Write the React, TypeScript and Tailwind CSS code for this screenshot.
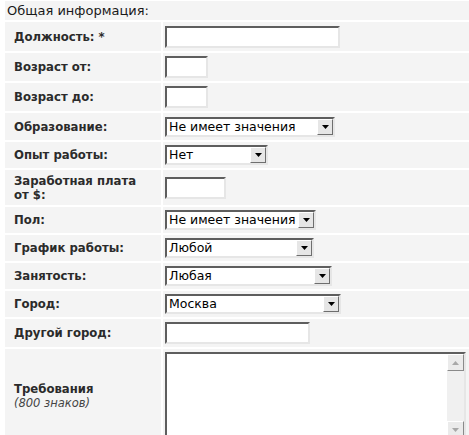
// Vacancy form "Общая информация" — old table-style layout with grey cells
// separated by thin white gaps, classic inset inputs and dropdowns.

const labelFont = "font-['DejaVu_Sans',Verdana,sans-serif]";

function TextBox({ w }: { w: string }) {
  return (
    <div
      className={`h-[22px] ${w} border-2 border-t-[#5e5e5e] border-l-[#5e5e5e] border-b-[#e6e6e6] border-r-[#e6e6e6] bg-white`}
    />
  );
}

function Arrow({ dir, tone }: { dir: 'up' | 'down'; tone: string }) {
  return (
    <svg width="7" height="4" viewBox="0 0 7 4" className={tone}>
      {dir === 'down' ? <path d="M0 0h7L3.5 4z" fill="currentColor" /> : <path d="M0 4h7L3.5 0z" fill="currentColor" />}
    </svg>
  );
}

function Select({ w, value }: { w: string; value: string }) {
  return (
    <div
      className={`flex h-[20px] ${w} items-stretch border-2 border-t-[#5e5e5e] border-l-[#5e5e5e] border-b-[#e6e6e6] border-r-[#e6e6e6] bg-white`}
    >
      <span className="flex-1 overflow-hidden whitespace-nowrap pl-[2px] font-['DejaVu_Sans',sans-serif] text-[12.5px] leading-[16px] text-black">
        {value}
      </span>
      <span className="flex w-[16px] items-center justify-center border border-t-white border-l-white border-b-[#6e6e6e] border-r-[#6e6e6e] bg-[#e6e6e6]">
        <Arrow dir="down" tone="text-black" />
      </span>
    </div>
  );
}

function Row({ label, children, h }: { label: React.ReactNode; children: React.ReactNode; h: string }) {
  return (
    <>
      <div
        className={`flex ${h} items-center bg-[#f4f4f4] pl-[9px] ${labelFont} text-[11.7px] font-bold leading-[14px] text-[#2b2b2b]`}
      >
        <div>{label}</div>
      </div>
      <div className="flex items-center bg-[#f4f4f4] py-[3px] pl-[2px]">{children}</div>
    </>
  );
}

export default function App() {
  return (
    <div className="min-h-[435px] bg-white pl-[5px] pt-[1px]">
      <div className="grid grid-cols-[156px_1fr] gap-[2px]">
        <div
          className={`col-span-2 flex h-[19px] items-center bg-[#f4f4f4] pl-[2px] ${labelFont} text-[13px] text-[#1a1a1a]`}
        >
          Общая информация:
        </div>

        <Row label="Должность: *" h="min-h-[29px]">
          <TextBox w="w-[175px]" />
        </Row>
        <Row label="Возраст от:" h="min-h-[28px]">
          <TextBox w="w-[43px]" />
        </Row>
        <Row label="Возраст до:" h="min-h-[28px]">
          <TextBox w="w-[43px]" />
        </Row>
        <Row label="Образование:" h="min-h-[27px]">
          <Select w="w-[170px]" value="Не имеет значения" />
        </Row>
        <Row label="Опыт работы:" h="min-h-[26px]">
          <Select w="w-[103px]" value="Нет" />
        </Row>
        <Row
          label={
            <>
              Заработная плата
              <br />
              от $:
            </>
          }
          h="min-h-[35px]"
        >
          <TextBox w="w-[61px]" />
        </Row>
        <Row label="Пол:" h="min-h-[26px]">
          <Select w="w-[151px]" value="Не имеет значения" />
        </Row>
        <Row label="График работы:" h="min-h-[26px]">
          <Select w="w-[149px]" value="Любой" />
        </Row>
        <Row label="Занятость:" h="min-h-[26px]">
          <Select w="w-[167px]" value="Любая" />
        </Row>
        <Row label="Город:" h="min-h-[26px]">
          <Select w="w-[176px]" value="Москва" />
        </Row>
        <Row label="Другой город:" h="min-h-[28px]">
          <TextBox w="w-[145px]" />
        </Row>
        <Row
          label={
            <>
              Требования
              <br />
              <span className="text-[11.5px] font-normal italic text-[#444]">(800 знаков)</span>
            </>
          }
          h="min-h-[94px]"
        >
          {/* Textarea with a classic (disabled) vertical scrollbar */}
          <div className="flex h-[88px] w-[301px] border-2 border-t-[#5e5e5e] border-l-[#5e5e5e] border-b-[#e6e6e6] border-r-[#e6e6e6] bg-white">
            <div className="flex-1" />
            <div className="flex w-[17px] flex-col bg-[#f0f0f0]">
              <span className="flex h-[17px] items-center justify-center border border-t-white border-l-white border-b-[#8a8a8a] border-r-[#8a8a8a] bg-[#ebebeb]">
                <Arrow dir="up" tone="text-[#a8a8a8]" />
              </span>
              <div className="flex-1" />
              <span className="flex h-[17px] items-center justify-center border border-t-white border-l-white border-b-[#8a8a8a] border-r-[#8a8a8a] bg-[#ebebeb]">
                <Arrow dir="down" tone="text-[#a8a8a8]" />
              </span>
            </div>
          </div>
        </Row>
      </div>
    </div>
  );
}
